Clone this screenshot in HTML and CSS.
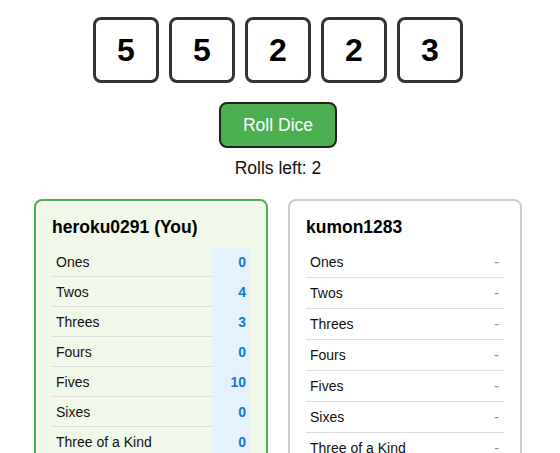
FILE: index.html
```html
<!DOCTYPE html>
<html>
<head>
<meta charset="utf-8">
<link rel="stylesheet" href="styles.css">
</head>
<body>
<div class="app">
  <div class="dice">
    <div class="die">5</div>
    <div class="die">5</div>
    <div class="die">2</div>
    <div class="die">2</div>
    <div class="die">3</div>
  </div>
  <button class="roll">Roll Dice</button>
  <div class="rolls">Rolls left: 2</div>
  <div class="players">
    <div class="card card-me">
      <div class="name">heroku0291 (You)</div>
      <div class="sheet">
        <div class="row"><span class="label">Ones</span><span class="score">0</span></div>
        <div class="row"><span class="label">Twos</span><span class="score">4</span></div>
        <div class="row"><span class="label">Threes</span><span class="score">3</span></div>
        <div class="row"><span class="label">Fours</span><span class="score">0</span></div>
        <div class="row"><span class="label">Fives</span><span class="score">10</span></div>
        <div class="row"><span class="label">Sixes</span><span class="score">0</span></div>
        <div class="row"><span class="label">Three of a Kind</span><span class="score">0</span></div>
      </div>
    </div>
    <div class="card card-other">
      <div class="name">kumon1283</div>
      <div class="sheet">
        <div class="row"><span class="label">Ones</span><span class="score">-</span></div>
        <div class="row"><span class="label">Twos</span><span class="score">-</span></div>
        <div class="row"><span class="label">Threes</span><span class="score">-</span></div>
        <div class="row"><span class="label">Fours</span><span class="score">-</span></div>
        <div class="row"><span class="label">Fives</span><span class="score">-</span></div>
        <div class="row"><span class="label">Sixes</span><span class="score">-</span></div>
        <div class="row"><span class="label">Three of a Kind</span><span class="score">-</span></div>
      </div>
    </div>
  </div>
</div>
</body>
</html>
```
FILE: styles.css
```css
html, body {
  margin: 0;
  padding: 0;
  background: #ffffff;
  font-family: "Liberation Sans", Arial, sans-serif;
  color: #000;
}

.app {
  padding: 17px 38px 0 34px;
  display: flex;
  flex-direction: column;
  align-items: center;
}

.dice {
  display: flex;
  gap: 10px;
}

.die {
  width: 60px;
  height: 60px;
  border: 3px solid #333;
  border-radius: 8px;
  background: #fff;
  display: flex;
  align-items: center;
  justify-content: center;
  font-size: 32px;
  font-weight: bold;
  color: #000;
}

.roll {
  margin-top: 19px;
  height: 46px;
  padding: 0 22px;
  background: #4caf50;
  color: #fff;
  border: 2px solid #222;
  border-radius: 8px;
  font-family: "Liberation Sans", Arial, sans-serif;
  font-size: 17.5px;
  line-height: 20px;
}

.rolls {
  margin-top: 10px;
  font-size: 17.5px;
  line-height: 20px;
  color: #111;
}

.players {
  margin-top: 21px;
  width: 100%;
  display: grid;
  grid-template-columns: 1fr 1fr;
  gap: 20px;
}

.card {
  border-radius: 8px;
  padding: 16px;
  border: 2px solid #ccc;
  background: #fff;
}

.card-me {
  border-color: #4caf50;
  background: #f1f8e9;
}

.name {
  font-size: 17.5px;
  font-weight: bold;
  line-height: 20px;
  margin-bottom: 10px;
}

.sheet {
  display: flex;
  flex-direction: column;
}

.row {
  display: grid;
  grid-template-columns: 1fr 38px;
  font-size: 14px;
  color: #111;
}

.label {
  padding-left: 4px;
  border-bottom: 1px solid #ddd;
  display: flex;
  align-items: center;
}

.score {
  padding-right: 5px;
  display: flex;
  align-items: center;
  justify-content: flex-end;
  border-bottom: 1px solid #ddd;
}

.card-me .label {
  height: 29px;
}

.card-me .score {
  height: 29px;
  padding-right: 4px;
  background: #e3f2fd;
  border-bottom-color: #e3f2fd;
  color: #1976d2;
  font-weight: bold;
}

.card-other .label,
.card-other .score {
  height: 30px;
}

.card-other .score {
  color: #888;
}
```
